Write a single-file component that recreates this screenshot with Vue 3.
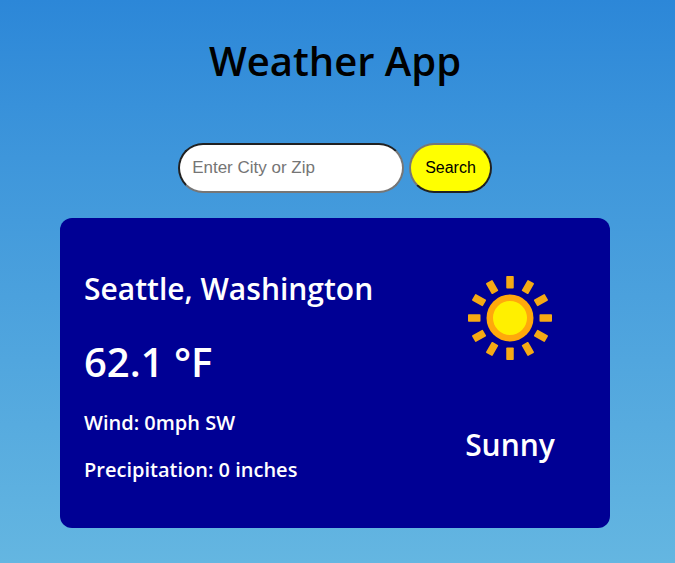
<script setup>
import { ref } from 'vue'

const query = ref('')
const weather = {
  place: 'Seattle, Washington',
  temperature: '62.1 °F',
  wind: '0mph SW',
  precipitation: '0 inches',
  condition: 'Sunny',
}
const rayAngles = Array.from({ length: 12 }, (_, i) => i * 30)
</script>

<template>
  <main class="app">
    <h1 class="title">Weather App</h1>
    <form class="search" @submit.prevent>
      <input v-model="query" class="field" type="text" placeholder="Enter City or Zip" aria-label="City or Zip" />
      <button class="submit" type="submit">Search</button>
    </form>
    <section class="card">
      <div class="details">
        <h2 class="place">{{ weather.place }}</h2>
        <p class="temperature">{{ weather.temperature }}</p>
        <p class="detail">Wind: {{ weather.wind }}</p>
        <p class="detail">Precipitation: {{ weather.precipitation }}</p>
      </div>
      <div class="condition">
        <svg class="sun" viewBox="-64 -64 128 128" aria-hidden="true">
          <rect
            v-for="angle in rayAngles"
            :key="angle"
            x="-3.75"
            y="-42"
            width="7.5"
            height="12.5"
            rx="0.8"
            fill="#f5aa14"
            :transform="`rotate(${angle})`"
          />
          <circle r="23.5" fill="#ffa90c" />
          <circle r="17" fill="#fff000" />
        </svg>
        <p class="summary">{{ weather.condition }}</p>
      </div>
    </section>
  </main>
</template>

<style>
body {
  margin: 0;
}
</style>

<style scoped>
.app {
  box-sizing: border-box;
  min-height: 100vh;
  padding: 34px 5px 35px 0;
  display: flex;
  flex-direction: column;
  align-items: center;
  background: linear-gradient(#2c87d8, #3e96db 28%, #64b6e1);
  font-family: "Open Sans", sans-serif;
}

.title {
  margin: 0;
  font-size: 40px;
  font-weight: 600;
  line-height: 54px;
  color: #000;
}

.search {
  display: flex;
  gap: 5px;
  margin: 55px 0 25px;
}

.field,
.submit {
  box-sizing: border-box;
  height: 50px;
  border-width: 2px;
  border-radius: 25px;
  font-family: "Liberation Sans", Arial, sans-serif;
}

.field {
  width: 226px;
  padding: 0 12px;
  border-style: inset;
  border-color: #767676;
  background: #fff;
  font-size: 17px;
}

.field::placeholder {
  color: #757575;
}

.submit {
  padding: 0 14px;
  border-style: outset;
  border-color: #767676;
  background: #ff0;
  color: #000;
  font-size: 16px;
}

.card {
  box-sizing: border-box;
  width: calc(100% - 120px);
  max-width: 550px;
  padding: 36px 36px 45px 24px;
  display: flex;
  justify-content: space-between;
  border-radius: 12px;
  background: #000094;
  color: #fff;
  font-weight: 600;
}

.details {
  padding-top: 15px;
}

.place,
.temperature,
.detail,
.summary {
  margin: 0;
  font-weight: inherit;
}

.place,
.summary {
  font-size: 30px;
  line-height: 40px;
}

.temperature {
  margin: 26px 0 20px;
  font-size: 40px;
  line-height: 54px;
}

.detail {
  font-size: 20px;
  line-height: 27px;
}

.detail + .detail {
  margin-top: 20px;
}

.condition {
  display: flex;
  flex-direction: column;
  align-items: center;
}

.sun {
  width: 128px;
  height: 128px;
}

.summary {
  margin-top: 43px;
}
</style>
